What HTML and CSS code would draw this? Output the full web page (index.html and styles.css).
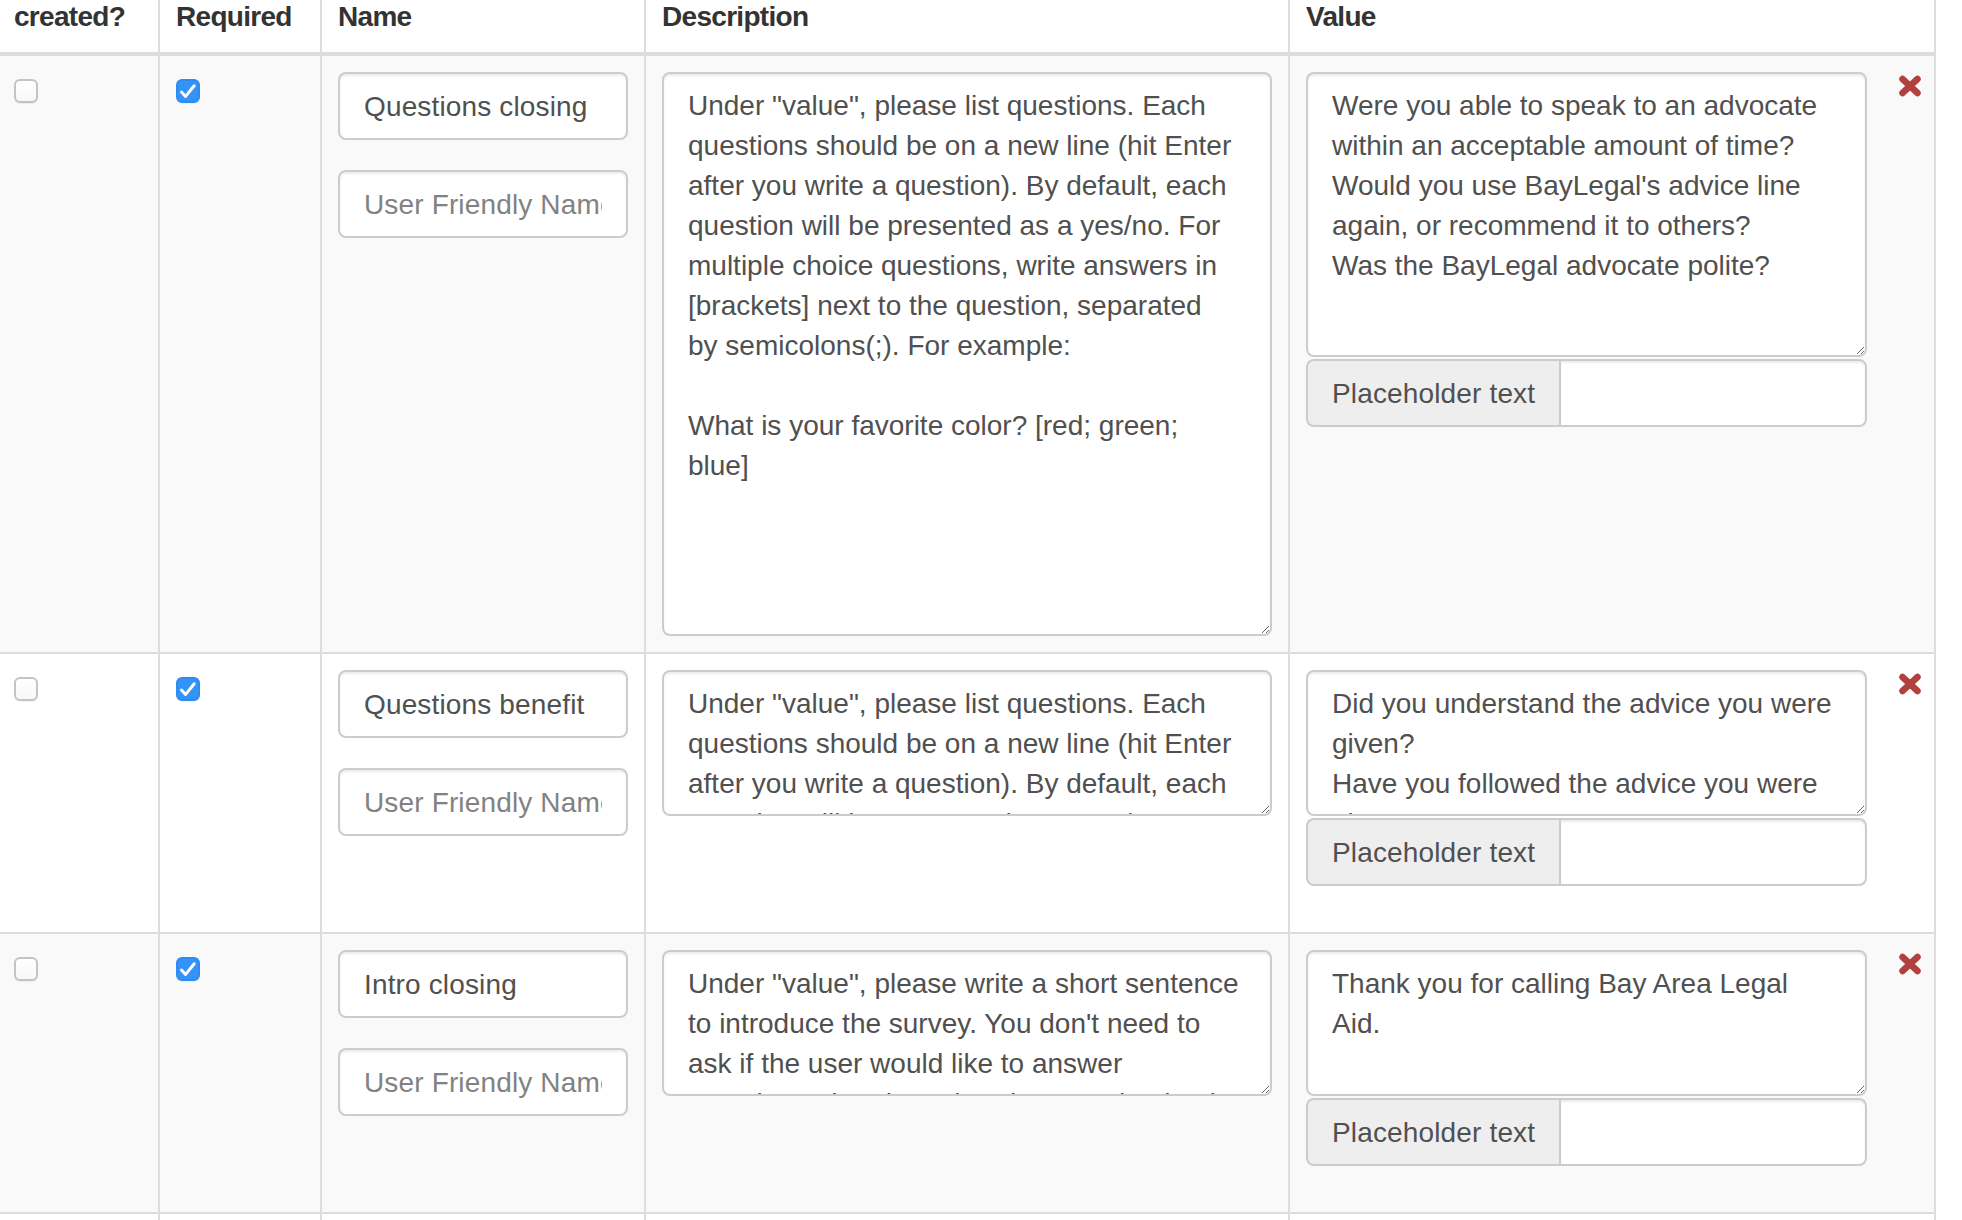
FILE: index.html
```html
<!DOCTYPE html>
<html lang="en">
<head>
<meta charset="utf-8">
<title>Survey fields</title>
<link rel="stylesheet" href="styles.css">
</head>
<body>
<div class="page">
<table class="fields">
  <colgroup>
    <col class="c-created"><col class="c-required"><col class="c-name"><col class="c-desc"><col class="c-value">
  </colgroup>
  <thead>
    <tr><th>created?</th><th>Required</th><th>Name</th><th>Description</th><th>Value</th></tr>
  </thead>
  <tbody>
    <tr>
      <td><label class="cb"><input type="checkbox"></label></td>
      <td><label class="cb"><input type="checkbox" checked><svg class="tick" viewBox="0 0 24 24"><path d="M5.5 13 L9.6 17.4 L18.2 6.8"/></svg></label></td>
      <td>
        <div class="form-group"><input class="form-control" type="text" value="Questions closing"></div>
        <div class="form-group"><input class="form-control" type="text" placeholder="User Friendly Name"></div>
      </td>
      <td><textarea class="form-control desc-tall">Under "value", please list questions. Each questions should be on a new line (hit Enter after you write a question). By default, each question will be presented as a yes/no. For multiple choice questions, write answers in [brackets] next to the question, separated by&nbsp;semicolons(;). For example:

What is your favorite color? [red; green; blue]</textarea></td>
      <td>
        <div class="value-cell">
          <div class="value-form form-group">
            <textarea class="form-control value-tall">Were you able to speak to an advocate within an acceptable amount of time?
Would you use BayLegal's advice line again, or recommend it to others?
Was the BayLegal advocate polite?</textarea>
            <div class="input-group"><span class="addon">Placeholder text</span><input class="form-control" type="text"></div>
          </div>
          <button class="remove" type="button" aria-label="Remove"><svg viewBox="0 0 24 22"><path d="M4.5 4 L19.5 18 M19.5 4 L4.5 18"/></svg></button>
        </div>
      </td>
    </tr>
    <tr>
      <td><label class="cb"><input type="checkbox"></label></td>
      <td><label class="cb"><input type="checkbox" checked><svg class="tick" viewBox="0 0 24 24"><path d="M5.5 13 L9.6 17.4 L18.2 6.8"/></svg></label></td>
      <td>
        <div class="form-group"><input class="form-control" type="text" value="Questions benefit"></div>
        <div class="form-group"><input class="form-control" type="text" placeholder="User Friendly Name"></div>
      </td>
      <td><textarea class="form-control short">Under "value", please list questions. Each questions should be on a new line (hit Enter after you write a question). By default, each question will be presented as a yes/no. For multiple choice questions, write answers in [brackets] next to the question, separated by&nbsp;semicolons(;). For example:

What is your favorite color? [red; green; blue]</textarea></td>
      <td>
        <div class="value-cell">
          <div class="value-form form-group">
            <textarea class="form-control short">Did you understand the advice you were given?
Have you followed the advice you were given?
Did the advice help you with your problem?</textarea>
            <div class="input-group"><span class="addon">Placeholder text</span><input class="form-control" type="text"></div>
          </div>
          <button class="remove" type="button" aria-label="Remove"><svg viewBox="0 0 24 22"><path d="M4.5 4 L19.5 18 M19.5 4 L4.5 18"/></svg></button>
        </div>
      </td>
    </tr>
    <tr>
      <td><label class="cb"><input type="checkbox"></label></td>
      <td><label class="cb"><input type="checkbox" checked><svg class="tick" viewBox="0 0 24 24"><path d="M5.5 13 L9.6 17.4 L18.2 6.8"/></svg></label></td>
      <td>
        <div class="form-group"><input class="form-control" type="text" value="Intro closing"></div>
        <div class="form-group"><input class="form-control" type="text" placeholder="User Friendly Name"></div>
      </td>
      <td><textarea class="form-control short">Under "value", please write a short sentence to introduce the survey. You don't need to ask if the user would like to answer questions, that they already agreed to by the time they get here.</textarea></td>
      <td>
        <div class="value-cell">
          <div class="value-form form-group">
            <textarea class="form-control short">Thank you for calling Bay Area Legal Aid.</textarea>
            <div class="input-group"><span class="addon">Placeholder text</span><input class="form-control" type="text"></div>
          </div>
          <button class="remove" type="button" aria-label="Remove"><svg viewBox="0 0 24 22"><path d="M4.5 4 L19.5 18 M19.5 4 L4.5 18"/></svg></button>
        </div>
      </td>
    </tr>
    <tr>
      <td><label class="cb"><input type="checkbox"></label></td>
      <td><label class="cb"><input type="checkbox" checked><svg class="tick" viewBox="0 0 24 24"><path d="M5.5 13 L9.6 17.4 L18.2 6.8"/></svg></label></td>
      <td></td>
      <td></td>
      <td></td>
    </tr>
  </tbody>
</table>
</div>
</body>
</html>
```

FILE: styles.css
```css
* { box-sizing: border-box; }

html, body {
  margin: 0;
  padding: 0;
  background: #fff;
}

body {
  font-family: "Liberation Sans", Arial, Helvetica, sans-serif;
  font-size: 28px;
  line-height: 40px;
  color: #333;
  overflow: hidden;
  height: 1220px;
}

.page {
  margin: -22px 0 0 -4px;
}

.fields {
  border-collapse: collapse;
  table-layout: fixed;
  width: 1938px;
  border: 2px solid #ddd;
}

.c-created { width: 162px; }
.c-required { width: 162px; }
.c-name { width: 324px; }
.c-desc { width: 644px; }
.c-value { width: 646px; }

.fields th,
.fields td {
  padding: 16px;
  border: 2px solid #ddd;
  text-align: left;
}

.fields th {
  padding: 17px 16px 15px;
  vertical-align: bottom;
  border-bottom-width: 4px;
  font-weight: bold;
  letter-spacing: -0.7px;
  color: #333;
  background: #fff;
}

.fields td {
  vertical-align: top;
}

.fields tbody tr:nth-child(odd) { background: #f9f9f9; }
.fields tbody tr:nth-child(even) { background: #fff; }

/* checkboxes */
.cb {
  position: relative;
  display: block;
  width: 24px;
  height: 24px;
  margin-top: 7px;
}

.cb input {
  -webkit-appearance: none;
  appearance: none;
  display: block;
  margin: 0;
  width: 24px;
  height: 24px;
  border: 2px solid #c3c3c3;
  border-radius: 6px;
  background: linear-gradient(#fff, #f7f7f7);
  box-shadow: 0 1px 1px rgba(0,0,0,.06);
}

.cb input:checked {
  border-color: #2f8af3;
  background: #3393f7;
}

.cb .tick {
  position: absolute;
  left: 0;
  top: 0;
  width: 24px;
  height: 24px;
  fill: none;
  stroke: #fff;
  stroke-width: 3;
  stroke-linecap: round;
  stroke-linejoin: round;
}

/* form controls */
.form-group { margin-bottom: 30px; }

.form-control {
  display: block;
  width: 100%;
  height: 68px;
  margin: 0;
  padding: 13px 24px 11px;
  font-family: inherit;
  font-size: 28px;
  line-height: 40px;
  letter-spacing: 0.15px;
  color: #505050;
  background: #fff;
  border: 2px solid #ccc;
  border-radius: 8px;
  box-shadow: inset 0 2px 2px rgba(0,0,0,.075);
  outline: none;
}

.form-control::placeholder { color: #828282; opacity: 1; }

textarea.form-control {
  height: auto;
  padding: 12px 24px;
  letter-spacing: 0;
  scrollbar-width: none;
  resize: both;
}
textarea.form-control::-webkit-scrollbar { display: none; }

.desc-tall { height: 564px !important; }
.value-tall { height: 285px !important; }
.short { height: 146px !important; }

.value-cell {
  display: flex;
  gap: 31px;
}

.value-form {
  flex: 0 0 561px;
}

.value-form textarea { margin-bottom: 2px; }

.input-group {
  display: flex;
}

.addon {
  flex: none;
  padding: 13px 24px 11px;
  font-size: 28px;
  line-height: 40px;
  letter-spacing: 0.15px;
  color: #505050;
  background: #eee;
  border: 2px solid #ccc;
  border-right: 0;
  border-radius: 8px 0 0 8px;
}

.input-group .form-control {
  flex: 1;
  border-radius: 0 8px 8px 0;
}

.remove {
  flex: 0 0 24px;
  width: 24px;
  height: 22px;
  margin-top: 3px;
  padding: 0;
  border: 0;
  background: none;
}

.remove svg {
  display: block;
  width: 24px;
  height: 22px;
  fill: none;
  stroke: #b0413e;
  stroke-width: 6.5;
  stroke-linecap: round;
}
```
